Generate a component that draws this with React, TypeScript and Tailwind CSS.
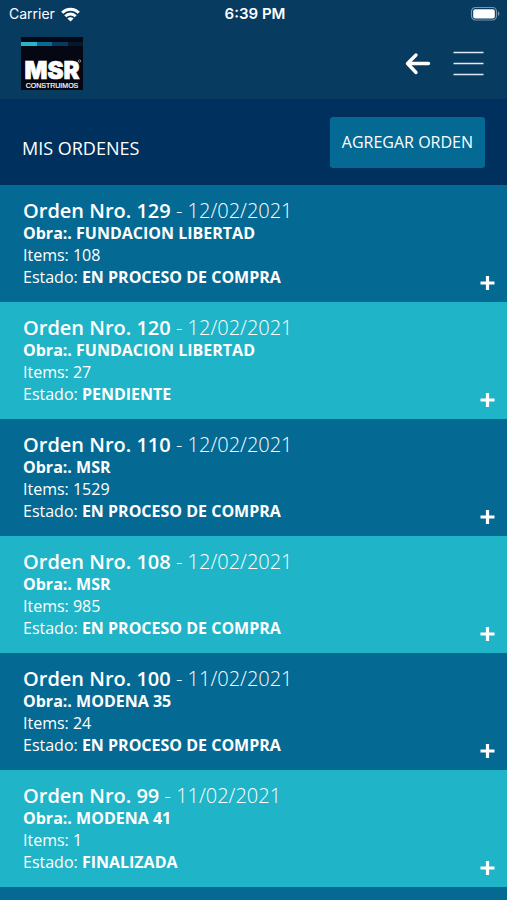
import React from 'react';

const orders = [
  { id: 129, date: '12/02/2021', site: 'FUNDACION LIBERTAD', items: 108, status: 'EN PROCESO DE COMPRA' },
  { id: 120, date: '12/02/2021', site: 'FUNDACION LIBERTAD', items: 27, status: 'PENDIENTE' },
  { id: 110, date: '12/02/2021', site: 'MSR', items: 1529, status: 'EN PROCESO DE COMPRA' },
  { id: 108, date: '12/02/2021', site: 'MSR', items: 985, status: 'EN PROCESO DE COMPRA' },
  { id: 100, date: '11/02/2021', site: 'MODENA 35', items: 24, status: 'EN PROCESO DE COMPRA' },
  { id: 99, date: '11/02/2021', site: 'MODENA 41', items: 1, status: 'FINALIZADA' },
];

function StatusBar() {
  return (
    <div className="grid grid-cols-3 items-center h-7 pl-[9px] pr-[6px] font-['Inter',sans-serif] leading-5">
      <div className="flex items-center gap-[6px] text-sm">
        <span>Carrier</span>
        <svg width="19" height="15" viewBox="0 0 19 15" fill="none" stroke="white" strokeWidth="2.9" aria-hidden="true">
          <path d="M1.2 5.8a11.6 11.6 0 0 1 16.6 0" />
          <path d="M4.3 9.2a7.2 7.2 0 0 1 10.4 0" />
          <path d="M9.5 14.6 6.4 11.5a4.4 4.4 0 0 1 6.2 0z" fill="white" stroke="none" />
        </svg>
      </div>
      <span className="text-center font-semibold text-[15px]">6:39 PM</span>
      <svg className="justify-self-end" width="31" height="16" viewBox="0 0 31 16" aria-hidden="true">
        <rect x="1.5" y="1.5" width="25" height="12.5" rx="4" fill="none" stroke="#7795ab" strokeWidth="1.2" />
        <rect x="3.2" y="3.2" width="21.6" height="9.2" rx="2" fill="white" />
        <path d="M28 5.6v4.4c1.9-.6 1.9-3.8 0-4.4z" fill="#7795ab" />
      </svg>
    </div>
  );
}

function Logo() {
  return (
    <svg width="62" height="53" viewBox="0 0 62 53" role="img" aria-label="MSR Construimos">
      <rect width="62" height="53" fill="#050713" />
      <rect y="5" width="16" height="4" fill="#28b5c5" />
      <rect x="16" y="5" width="15" height="4" fill="#086b94" />
      <rect x="31" y="5" width="16" height="4" fill="#073a62" />
      <rect x="47" y="5" width="15" height="4" fill="#06182b" />
      <text x="31" y="42" textAnchor="middle" fill="white" stroke="white" strokeWidth="0.7" fontFamily="Inter, sans-serif" fontWeight="900" fontSize="24">
        MSR
      </text>
      <circle cx="58.5" cy="24" r="1.2" fill="none" stroke="#b8bcc4" strokeWidth="0.7" />
      <text x="31" y="51" textAnchor="middle" fill="white" stroke="white" strokeWidth="0.2" fontFamily="Liberation Sans, sans-serif" fontSize="7">
        CONSTRUIMOS
      </text>
    </svg>
  );
}

export default function App() {
  return (
    <div className="min-h-screen bg-[#046a94] font-['Open_Sans',sans-serif] text-white">
      <header className="bg-[#073b60]">
        <StatusBar />
        <div className="flex items-center justify-between h-[71px] pl-[21px] pr-[23px]">
          <Logo />
          <div className="flex items-center gap-[22px]">
            <button type="button" aria-label="Volver">
              <svg width="26" height="26" viewBox="0 0 26 26" fill="none" stroke="white" strokeWidth="3.4" strokeLinecap="round" strokeLinejoin="round">
                <path d="M23.5 12.5H3.5M11 4l-8.5 8.5L11 21.5" />
              </svg>
            </button>
            <button type="button" aria-label="Menú">
              <svg width="31" height="26" viewBox="0 0 31 26" stroke="#dfeaf4" strokeWidth="1.5">
                <path d="M0.5 1.5h30M0.5 12.5h30M0.5 23.5h30" />
              </svg>
            </button>
          </div>
        </div>
      </header>

      <section className="flex items-center justify-between h-[86px] px-[22px] bg-[#00315e]">
        <h1 className="pt-3 text-lg leading-6">MIS ORDENES</h1>
        <button type="button" className="h-[51px] px-3 rounded-[3px] bg-[#046a94] text-base">
          AGREGAR ORDEN
        </button>
      </section>

      <ul>
        {orders.map((order) => (
          <li
            key={order.id}
            className="flex items-end justify-between h-[117px] pt-[15px] pb-[12px] pl-[23px] pr-[12px] even:bg-[#1fb4c7]"
          >
            <div className="self-start text-base leading-[22px]">
              <h2 className="text-xl leading-[22px] font-light">
                <strong className="font-semibold">Orden Nro. {order.id}</strong> - {order.date}
              </h2>
              <p className="font-bold">Obra:. {order.site}</p>
              <p>Items: {order.items}</p>
              <p>
                Estado: <strong className="font-bold">{order.status}</strong>
              </p>
            </div>
            <button type="button" aria-label={`Ver orden ${order.id}`}>
              <svg width="15" height="14" viewBox="0 0 15 14" fill="none" stroke="white" strokeWidth="3.2">
                <path d="M0.5 7h14M7.5 0v14" />
              </svg>
            </button>
          </li>
        ))}
      </ul>
    </div>
  );
}
